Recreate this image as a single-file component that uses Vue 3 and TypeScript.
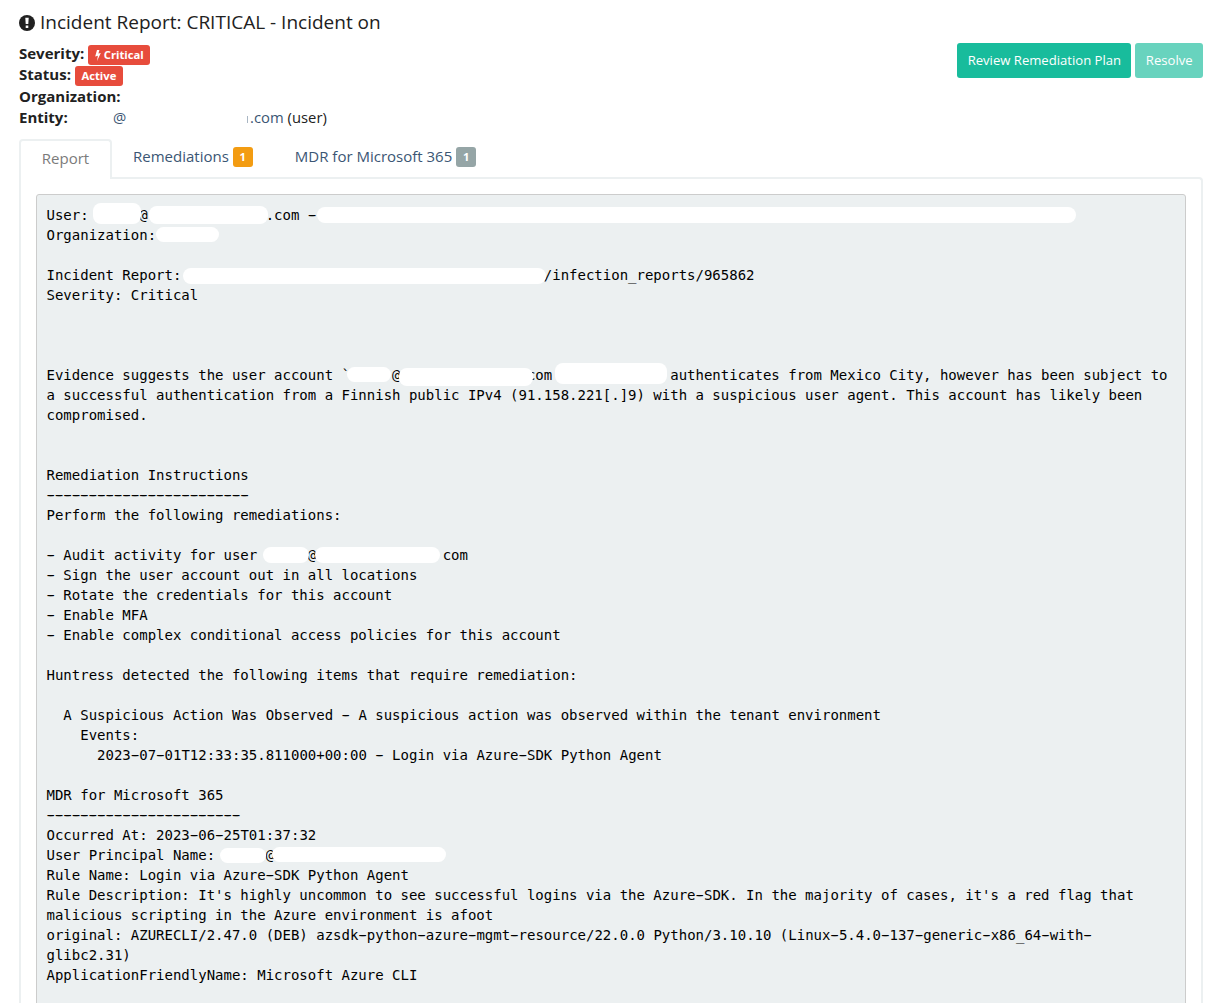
<template>
  <div class="page">
    <h4 class="title">
      <svg class="icon-alert" viewBox="0 0 16 16">
        <circle cx="8" cy="8" r="8" fill="#212121" />
        <path d="M6.3 2.7h3.4l-.4 6.3H6.7z M6.7 10.4h2.6v2.5H6.7z" fill="#fff" />
      </svg>
      <span>Incident Report: CRITICAL - Incident on</span>
    </h4>

    <header class="summary">
      <div class="facts">
        <div class="fact">
          <strong>Severity:</strong>
          <span class="label danger critical">
            <svg class="icon-bolt" viewBox="0 0 6 11"><path d="M2 0h2.4L3.4 3.6 5.8 3 2 11l.9-5.2L.2 6.5z" fill="#fff" /></svg>Critical
          </span>
        </div>
        <div class="fact">
          <strong>Status:</strong>
          <span class="label danger">Active</span>
        </div>
        <div class="fact"><strong>Organization:</strong></div>
        <div class="fact">
          <strong class="entity">Entity:</strong>
          <a class="at">@</a>
          <a class="domain">.com</a>
          <span class="kind">(user)</span>
        </div>
      </div>
      <div class="actions">
        <button class="btn">Review Remediation Plan</button>
        <button class="btn" disabled>Resolve</button>
      </div>
    </header>

    <nav class="tabs">
      <a
        v-for="tab in tabs"
        :key="tab.id"
        :class="['tab', current === tab.id && 'active']"
        @click="current = tab.id"
      >
        <span>{{ tab.label }}</span>
        <span v-if="tab.count" :class="['label', tab.tone]">{{ tab.count }}</span>
      </a>
    </nav>

    <section class="panel">
      <div class="log">
        <div v-for="(line, i) in lines" :key="i" class="line"><span
          v-for="(part, k) in split(line.text)"
          :key="k"
          :class="{ dash: part.startsWith('-') }"
        >{{ part }}</span><i
          v-for="(m, j) in line.masks"
          :key="j"
          class="mask"
          :style="{ left: m[0] + 'px', top: m[1] + 'px', width: m[2] + 'px', height: m[3] + 'px' }"
        /></div>
      </div>
    </section>
  </div>
</template>

<script setup lang="ts">
import { ref } from 'vue';

// ==================== Tabs ====================
type TabId = 'report' | 'remediations' | 'mdr';

const current = ref<TabId>('report');

const tabs: { id: TabId; label: string; count?: number; tone?: string }[] = [
  { id: 'report', label: 'Report' },
  { id: 'remediations', label: 'Remediations', count: 1, tone: 'warning' },
  { id: 'mdr', label: 'MDR for Microsoft 365', count: 1, tone: 'muted' },
];

// ==================== Report text ====================
// mask: [left, top, width, height] relative to its line
type Mask = [number, number, number, number];
interface Line { text: string; masks?: Mask[] }

const gap = (n: number) => ' '.repeat(n);
const plain = (text: string): Line[] => text.split('\n').map((t) => ({ text: t }));

// runs of hyphens get their own span so they can be drawn wider
const split = (text: string) => text.split(/(-+)/).filter(Boolean);

const lines: Line[] = [
  {
    text: 'User:' + gap(6) + '@' + gap(14) + '.com -',
    masks: [[46, -2, 48, 21], [102, 1.5, 119, 18], [270.5, 2, 759, 16]],
  },
  { text: 'Organization:', masks: [[109, 2, 63, 15]] },
  { text: '' },
  {
    text: 'Incident Report:' + gap(43) + '/infection_reports/965862',
    masks: [[136.5, 3, 363, 16]],
  },
  ...plain('Severity: Critical\n\n\n'),
  {
    text: 'Evidence suggests the user account `' + gap(5) + '@' + gap(15) + 'com' + gap(14)
      + 'authenticates from Mexico City, however has been subject to',
    masks: [[300.5, 2, 44, 15], [352, 3, 134, 18], [508, -2, 112, 21]],
  },
  ...plain(`a successful authentication from a Finnish public IPv4 (91.158.221[.]9) with a suspicious user agent. This account has likely been
compromised.


Remediation Instructions
------------------------
Perform the following remediations:
`),
  {
    text: '- Audit activity for user' + gap(6) + '@' + gap(15) + 'com',
    masks: [[216, 2, 46.5, 16], [268.5, 2, 125, 16]],
  },
  ...plain(`- Sign the user account out in all locations
- Rotate the credentials for this account
- Enable MFA
- Enable complex conditional access policies for this account

Huntress detected the following items that require remediation:

  A Suspicious Action Was Observed - A suspicious action was observed within the tenant environment
    Events:
      2023-07-01T12:33:35.811000+00:00 - Login via Azure-SDK Python Agent

MDR for Microsoft 365
-----------------------
Occurred At: 2023-06-25T01:37:32`),
  {
    text: 'User Principal Name:' + gap(6) + '@',
    masks: [[173.5, 3, 46, 15], [225.5, 2, 173.5, 15]],
  },
  ...plain(`Rule Name: Login via Azure-SDK Python Agent
Rule Description: It's highly uncommon to see successful logins via the Azure-SDK. In the majority of cases, it's a red flag that
malicious scripting in the Azure environment is afoot
original: AZURECLI/2.47.0 (DEB) azsdk-python-azure-mgmt-resource/22.0.0 Python/3.10.10 (Linux-5.4.0-137-generic-x86_64-with-
glibc2.31)
ApplicationFriendlyName: Microsoft Azure CLI

`),
];
</script>

<style>
body {
  background: #fff;
}
</style>

<style scoped>
.page {
  box-sizing: border-box;
  height: 1003px;
  padding: 9px 3px 0 19px;
  overflow: hidden;
  display: flex;
  flex-direction: column;
  font-family: "Open Sans", sans-serif;
  font-size: 15px;
  line-height: 21.43px;
  color: #212121;
}

.title {
  display: flex;
  align-items: center;
  gap: 5px;
  height: 27px;
  margin: 0 0 7px;
  font-size: 19px;
  font-weight: 400;
  white-space: nowrap;
}

.icon-alert {
  width: 16px;
  height: 16px;
}

.summary {
  display: flex;
  justify-content: space-between;
  height: 96px;
}

.fact {
  display: flex;
  height: 21.43px;
  white-space: nowrap;
}

.fact strong {
  font-weight: 700;
}

a {
  color: #3b5674;
  text-decoration: none;
}

.label {
  box-sizing: border-box;
  height: 20px;
  padding: 0 6.5px;
  border-radius: 3px;
  color: #fff;
  font-size: 11.25px;
  font-weight: 700;
  line-height: 20px;
}

.fact .label {
  margin: 2px 0 0 4px;
}

.critical {
  display: flex;
  align-items: center;
  gap: 3px;
}

.icon-bolt {
  width: 6px;
  height: 11px;
}

.danger { background: #e74c3c; }
.warning { background: #f39c12; }
.muted { background: #95a5a6; }

.fact .entity {
  width: 94px;
}

.fact a,
.kind {
  font-size: 14.8px;
}

.at {
  width: 123px;
}

/* sliver of the letter left of the dot */
.domain::before {
  content: "";
  display: inline-block;
  width: 1px;
  height: 7px;
  margin: 0 2px 0 11px;
  background: #a9b6c3;
}

.kind {
  margin-left: 4px;
}

.actions {
  display: flex;
  align-items: flex-start;
  gap: 4px;
}

.btn {
  height: 35px;
  padding: 0 10.4px;
  border: 0;
  border-radius: 3px;
  background: #18bc9c;
  color: #fff;
  font-family: inherit;
  font-size: 13.1px;
  line-height: 35px;
  white-space: nowrap;
}

.btn:disabled {
  opacity: 0.65;
}

.tabs {
  display: flex;
  gap: 42px;
  height: 40px;
  flex: none;
}

.tab {
  box-sizing: border-box;
  display: flex;
  gap: 4px;
  height: 40px;
  padding-top: 7px;
  font-size: 15px;
  white-space: nowrap;
  cursor: pointer;
}

.tab .label {
  margin-top: 1px;
  padding: 0 6.8px;
}

.tab.active {
  position: relative;
  z-index: 1;
  width: 93px;
  margin-right: -21px;
  justify-content: center;
  border: 2px solid #ecf0f1;
  border-bottom: 0;
  border-radius: 4px 4px 0 0;
  background: #fff;
  color: #7b7b7b;
}

.panel {
  flex: 1;
  min-height: 0;
  margin-top: -2px;
  padding: 15px 15px 0;
  border: 2px solid #ecf0f1;
  border-bottom: 0;
  border-radius: 0 4px 0 0;
}

.log {
  padding: 9.5px;
  border: 1px solid #ccc;
  border-radius: 3px;
  background: #ecf0f1;
  color: #000;
  font-family: "DejaVu Sans Mono", monospace;
  font-size: 14px;
  line-height: 20px;
}

.line {
  position: relative;
  height: 20px;
  white-space: pre;
}

.dash {
  text-shadow: 1.6px 0 #000, -1.6px 0 #000;
}

.mask {
  position: absolute;
  border-radius: 8px;
  background: #fff;
}
</style>
